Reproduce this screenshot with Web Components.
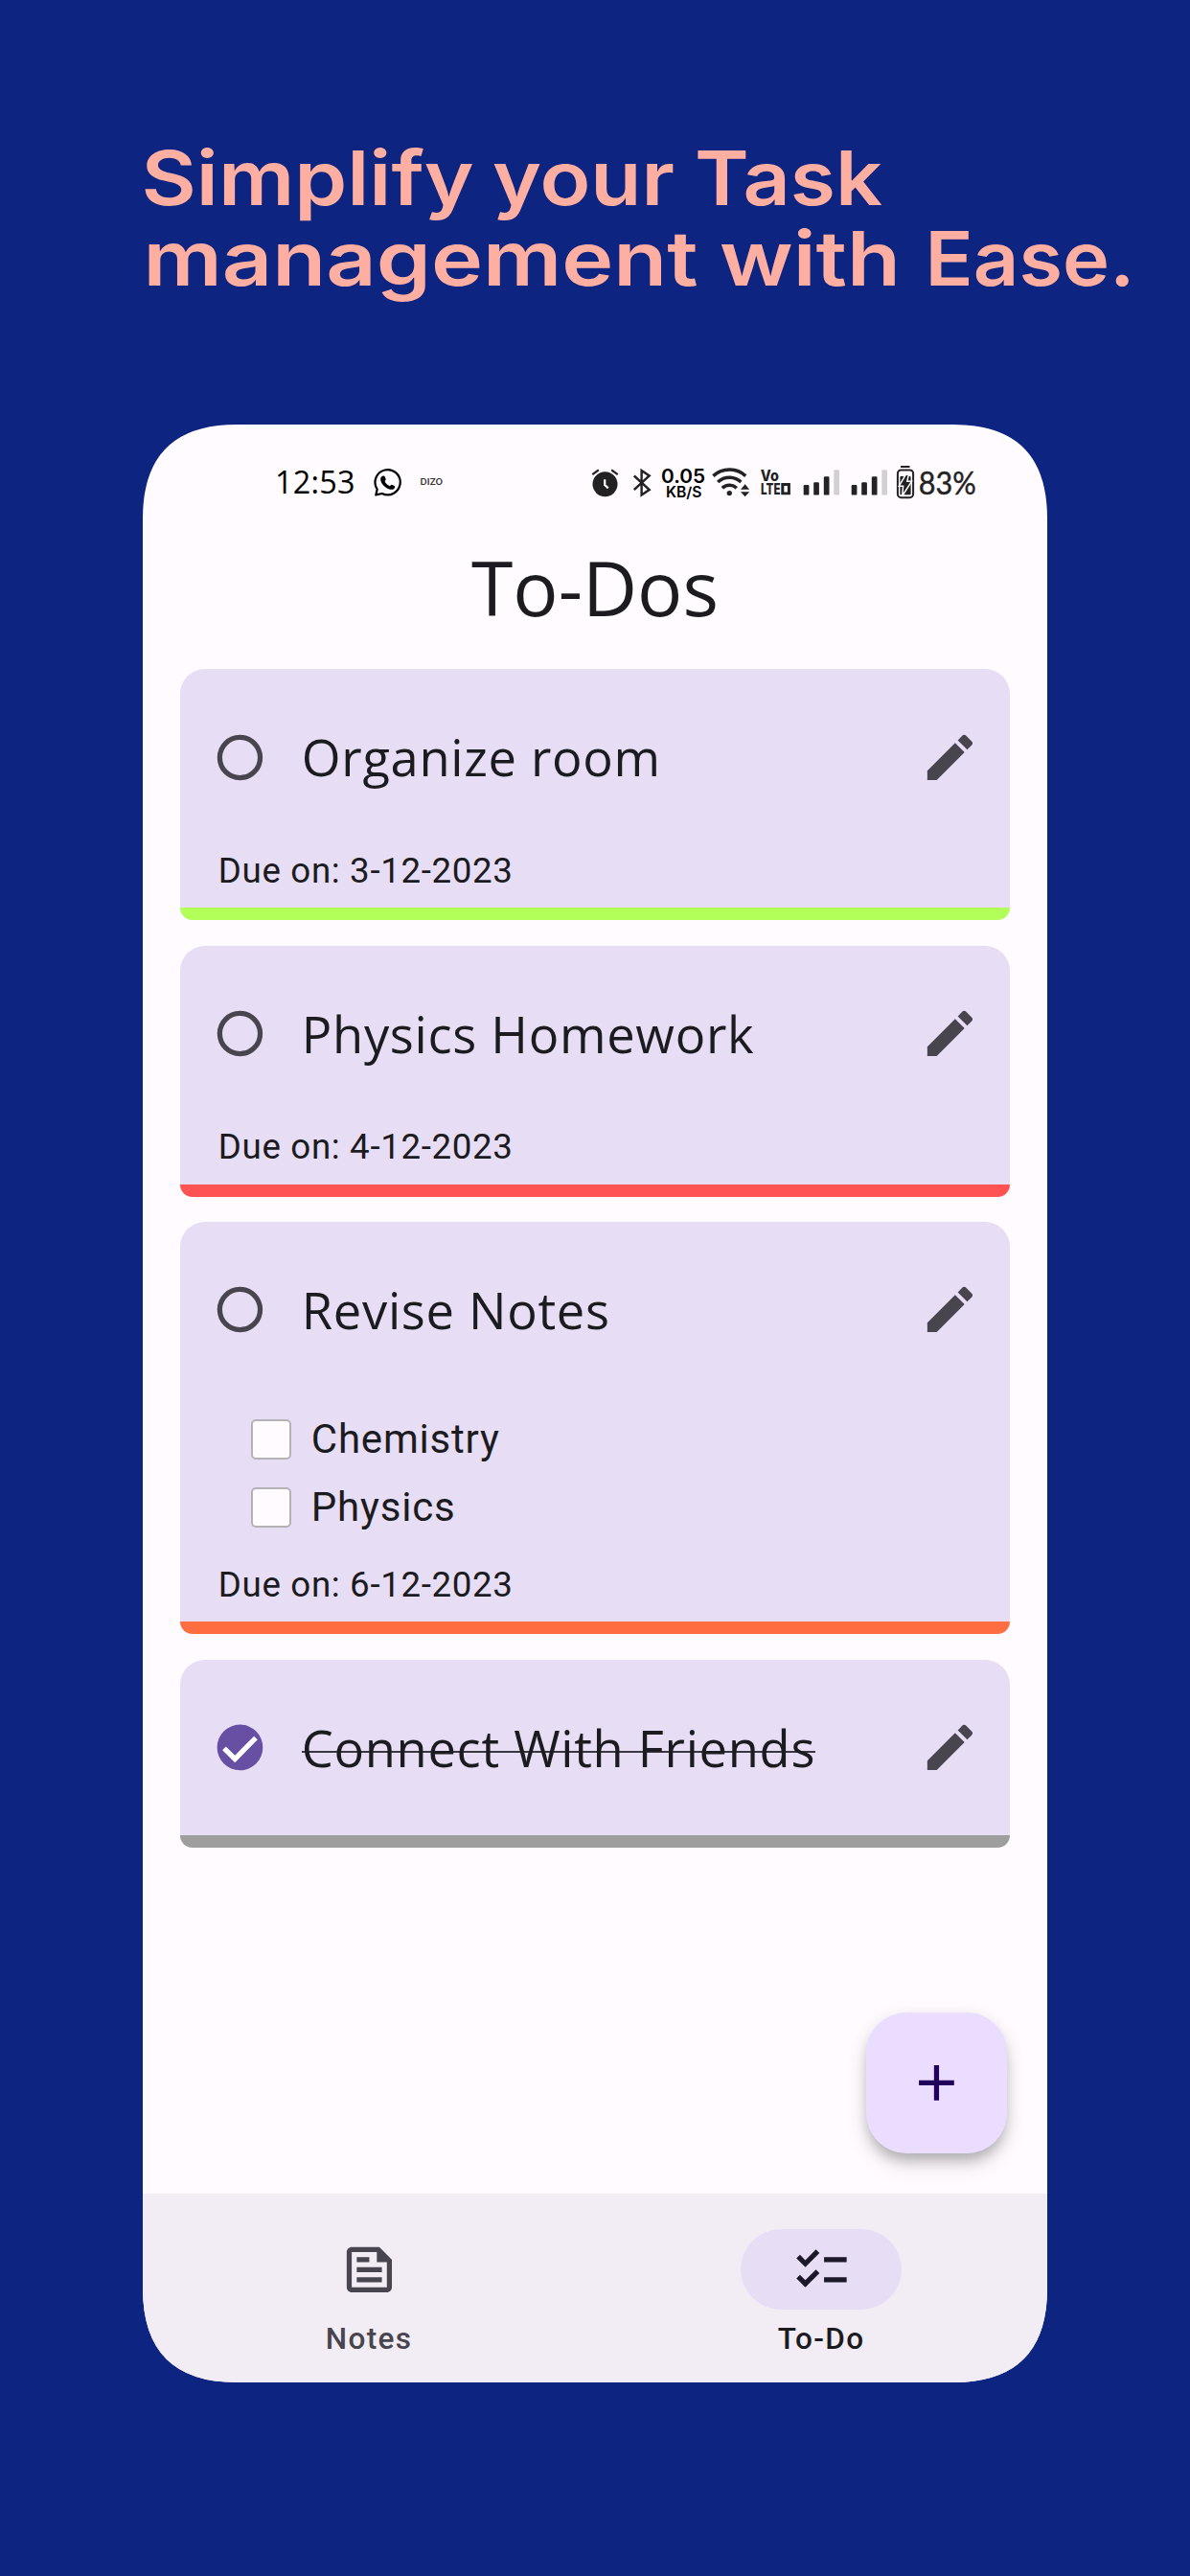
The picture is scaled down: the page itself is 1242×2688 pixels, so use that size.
<!DOCTYPE html>
<html lang="en">
<head>
<meta charset="utf-8">
<title>To-Dos</title>
<style>
html,body{margin:0;padding:0;background:#0d2481}
</style>
</head>
<body>
<promo-page>
  <phone-frame>
    <status-bar></status-bar>
    <page-title>To-Dos</page-title>
    <todo-list>
      <todo-card stripe="#b2ff59" due="3-12-2023">Organize room</todo-card>
      <todo-card stripe="#ff5252" due="4-12-2023">Physics Homework</todo-card>
      <todo-card stripe="#ff6e40" due="6-12-2023">Revise Notes
        <sub-task slot="tasks">Chemistry</sub-task>
        <sub-task slot="tasks">Physics</sub-task>
      </todo-card>
      <todo-card stripe="#9e9e9e" done>Connect With Friends</todo-card>
    </todo-list>
    <add-button></add-button>
    <nav-bar slot="nav">
      <nav-item icon="feed">Notes</nav-item>
      <nav-item icon="checklist" active>To-Do</nav-item>
    </nav-bar>
  </phone-frame>
</promo-page>
<script>
const ICONS = {
  edit: 'M3 17.25V21h3.75L17.81 9.94l-3.75-3.75L3 17.25zM20.71 7.04c.39-.39.39-1.02 0-1.41l-2.34-2.34c-.39-.39-1.02-.39-1.41 0l-1.83 1.83 3.75 3.75 1.83-1.83z',
  feed: 'M16 3H5C3.9 3 3 3.9 3 5v14c0 1.1.9 2 2 2h14c1.1 0 2-.9 2-2V8l-5-5zM19 19H5V5h10v4h4v10zM7 17h10v-2H7v2zM12 7H7v2h5V7zM7 13h10v-2H7v2z',
  checklist: 'M22 7h-9v2h9V7zM22 15h-9v2h9v-2zM5.54 11L2 7.46l1.41-1.41 2.12 2.12 4.24-4.24 1.41 1.41L5.54 11zM5.54 19L2 15.46l1.41-1.41 2.12 2.12 4.24-4.24 1.41 1.41L5.54 19z',
  add: 'M19 13h-6v6h-2v-6H5v-2h6V5h2v6h6v2z'
};
const icon = n => `<svg viewBox="0 0 24 24" width="62.9" height="62.9" fill="currentColor" fill-rule="evenodd"><path d="${ICONS[n]}"/></svg>`;

function define(name, render) {
  customElements.define(name, class extends HTMLElement {
    constructor() { super(); this.attachShadow({ mode: 'open' }); }
    connectedCallback() { this.shadowRoot.innerHTML = render(this); }
  });
}

const word = (x, w, t) => `<tspan x="${x}" textLength="${w}" lengthAdjust="spacingAndGlyphs">${t}</tspan>`;

define('promo-page', () => `
<style>
:host{display:flex;flex-direction:column;align-items:flex-start;width:1242px;height:2688px;background:#0d2481;overflow:hidden}
h1{margin:0;padding:120px 0 0 130px;height:323px;font-size:0}
.h{display:block;fill:#ffafa2;font-family:Inter,"Liberation Sans",sans-serif;font-weight:580;font-size:78.5px}
slot{display:block;margin-left:149px}
</style>
<h1><svg class="h" width="1100" height="220" viewBox="130 120 1100 220">
<text y="213.6">${word(147.5, 347, 'Simplify')} ${word(514, 190, 'your')} ${word(725, 196, 'Task')}</text>
<text y="297.6">${word(149.5, 579, 'management')} ${word(751, 189, 'with')} ${word(965.5, 219, 'Ease.')}</text></svg></h1>
<slot></slot>`);

define('phone-frame', () => `
<style>
:host{display:flex;flex-direction:column;width:944px;height:2043px;background:#fffbff;color:#1c1b1f;
clip-path:path("M0 98Q0 0 98 0H846Q944 0 944 98V1945Q944 2043 846 2043H98Q0 2043 0 1945Z")}
main{flex:1;display:flex;flex-direction:column}
</style>
<main><slot></slot></main><slot name="nav"></slot>`);

const bars = x => `<svg style="margin-left:${x > 860 ? 11 : 12}px" width="39" height="36" viewBox="${x} 486 39 36"><g fill="#232323">
<rect x="${x + .7}" y="506" width="5.7" height="10.6" rx="1.2"/><rect x="${x + 11.2}" y="503.3" width="5.7" height="13.3" rx="1.2"/><rect x="${x + 21.8}" y="497.2" width="5.7" height="19.4" rx="1.2"/></g><rect x="${x + 32.3}" y="490.2" width="5.7" height="26.4" rx="1.2" fill="#d3d0d3"/></svg>`;

define('status-bar', () => `
<style>
:host{display:flex;align-items:flex-start;height:74px;padding:43px 0 0 139px;color:#222}
svg{display:block;flex:none;fill:#222;overflow:visible;font-family:Inter,"Liberation Sans",sans-serif}
.k{fill:#000}
</style>
<svg class="k" width="81" height="36" viewBox="288 486 81 36"><text x="287" y="514.7" font-family="Open Sans" font-size="32.4" font-weight="500" textLength="83.5">12:53</text></svg>
<svg class="k" style="margin-left:21px" width="30" height="36" viewBox="390 486 30 36">
<path d="M392.3 516.4L393.7 510.5A13.1 13.1 0 1 1 398.8 515Z" fill="none" stroke="#000" stroke-width="2.2" stroke-linejoin="round"/>
<path d="M398.4 497.2c1.3-1.1 2.8-.9 3.3.4l1 2.5c.2.7-.8 1.6-1.1 2.2 1.2 2.4 2.8 4 5.2 4.9.7-.4 1.3-1.7 2-1.5l2.9 1.4c.9.5.4 2.1-.4 2.8-1.8 1.5-4.5 1.2-7.7-.7-3-1.7-5.2-4.3-6.2-7.5-.5-1.8-.2-3.500 1-4.500z"/></svg>
<svg style="margin-left:18px" width="26" height="36" viewBox="438 486 26 36"><text x="438.600" y="506.400" font-size="8.500" font-weight="600" fill="#333" textLength="23.500" lengthAdjust="spacingAndGlyphs">DIZO</text></svg>
<svg style="margin-left:153px" width="29" height="36" viewBox="617 486 29 36">
<circle cx="631.500" cy="505.300" r="13"/><path d="M618.300 495.200L624.800 490.300M644.700 495.200L638.200 490.300" stroke="#222" stroke-width="2.200"/>
<path d="M631.200 500.200V506L634.800 509.300" fill="none" stroke="#fffbff" stroke-width="2.300"/></svg>
<svg style="margin-left:15px" width="19" height="36" viewBox="661 486 19 36"><path d="M661.800 496.500L677.700 511L669.600 516.500V491L677.700 496.500L661.800 511" fill="none" stroke="#222" stroke-width="2.400" stroke-linejoin="miter"/></svg>
<svg class="k" style="margin-left:10px" width="46" height="36" viewBox="690 486 46 36"><text x="690" y="503.500" font-size="20.500" font-weight="560" textLength="46" lengthAdjust="spacingAndGlyphs">0.05</text><text x="695" y="518.700" font-size="15.300" font-weight="560" textLength="37.500" lengthAdjust="spacingAndGlyphs">KB/S</text></svg>
<svg style="margin-left:7px" width="40" height="36" viewBox="743 486 40 36"><circle cx="761.300" cy="514.600" r="2.700"/>
<g fill="none" stroke="#222" stroke-width="3.500"><path d="M744.400 496.600A25 25 0 0 1 778.200 496.600"/><path d="M749.200 503A17.500 17.500 0 0 1 773.400 503"/><path d="M753.800 509.300A10.800 10.800 0 0 1 768.800 509.300"/></g>
<path d="M773 510.800L777.600 505.300L782.200 510.800ZM773 513.300L777.600 518.200L782.200 513.300Z"/></svg>
<svg style="margin-left:11px" width="32" height="36" viewBox="794 486 32 36"><text x="793.800" y="502" font-size="16" font-weight="800" textLength="19" lengthAdjust="spacingAndGlyphs">Vo</text><text x="794" y="516.200" font-size="16.500" font-weight="800" textLength="20.500" lengthAdjust="spacingAndGlyphs">LTE</text>
<path fill-rule="evenodd" d="M815.300 504H824.900V516.300H815.300ZM818.300 507V513.400H821.900V507Z"/></svg>
${bars(838)}${bars(888)}
<svg style="margin-left:9px" width="18" height="36" viewBox="936 486 18 36"><path d="M940 487H949.500" stroke="#222" stroke-width="2"/><rect x="936.900" y="490.400" width="16.200" height="28.800" rx="3.600" fill="none" stroke="#222" stroke-width="2"/><rect x="939.400" y="497" width="11.200" height="19.200" rx=".8"/>
<path d="M945.300 495.300L938.300 507.200H942.600L941.700 517.500L951.500 502.300H946.800L948.300 495.300Z" fill="#222" stroke="#fffbff" stroke-width="1.500"/></svg>
<svg style="margin-left:5px" width="60" height="36" viewBox="959 486 60 36"><text x="958.800" y="515.500" font-family="Lato" font-size="32" textLength="60" lengthAdjust="spacingAndGlyphs" stroke="#222" stroke-width=".4">83%</text></svg>`);

define('page-title', () => `
<style>:host{display:block;height:104.400px;line-height:106.400px;text-align:center;font-family:"Open Sans",sans-serif;font-size:78.700px}</style><slot></slot>`);

define('todo-list', () => `
<style>:host{display:flex;flex-direction:column;gap:26.200px;padding:33.900px 39.300px 0}</style><slot></slot>`);

define('todo-card', el => `
<style>
:host{display:block;background:#e7def6;border-radius:26px 26px 13px 13px;overflow:hidden}
.row{display:flex;align-items:center;height:183.400px;padding:0 31px 0}
.mark{flex:none;width:62.900px;height:62.900px;color:#49454f}
.mark svg,.pen svg{display:block}
.title{flex:1;margin-left:32.600px;font:400 52.440px/71px "Open Sans",sans-serif;letter-spacing:.7px;white-space:nowrap}
.title span{${el.hasAttribute('done') ? 'background:linear-gradient(#3a3740,#3a3740) 0 39px/100% 2px no-repeat' : ''}}
.pen{flex:none;color:#49454f}
.due{height:43px;padding:5.300px 39.500px 17.300px;font:400 36.700px/43px Roboto,sans-serif;letter-spacing:.66px;white-space:pre}
.tasks{display:block;padding:8px 73.500px 18.200px}
.stripe{height:13.200px;background:${el.getAttribute('stripe')}}
</style>
<div class="row"><div class="mark"><svg viewBox="0 0 24 24" width="62.900" height="62.900">${el.hasAttribute('done')
  ? '<circle cx="12" cy="12" r="9.100" fill="#6750a4"/><path d="M5.700 12.400L10 16.600L18.300 8.200" fill="none" stroke="#fff" stroke-width="2"/>'
  : '<circle cx="12" cy="12" r="8.050" fill="none" stroke="currentColor" stroke-width="2"/>'}</svg></div>
<div class="title"><span><slot></slot></span></div><div class="pen">${icon('edit')}</div></div>
${el.querySelector('sub-task') ? '<div class="tasks"><slot name="tasks"></slot></div>' : ''}
${el.hasAttribute('due') ? `<div class="due">Due on: ${el.getAttribute('due')}</div>` : ''}
<div class="stripe"></div>`);

define('sub-task', () => `
<style>
:host{display:flex;align-items:center;height:71px;font:400 42px/50px Roboto,sans-serif;letter-spacing:.8px}
i{box-sizing:border-box;width:42px;height:42px;border:2px solid #b5b2b5;border-radius:5px;background:#fffbff;margin-right:21px}
</style><i></i><slot></slot>`);

define('add-button', () => `
<style>
:host{display:flex;align-items:center;justify-content:center;align-self:flex-end;width:147px;height:147px;margin:auto 42px 42px 0;border-radius:42px;background:#eaddff;color:#21005d;
box-shadow:0 10px 13px -3px rgba(0,0,0,.2),0 14px 24px rgba(0,0,0,.09),0 3px 20px rgba(0,0,0,.08)}
</style>${icon('add')}`);

define('nav-bar', () => `
<style>:host{display:flex;height:197px;background:#f2edf5}::slotted(*){flex:1}</style><slot></slot>`);

define('nav-item', el => `
<style>
:host{display:flex;flex-direction:column;align-items:center;gap:10px;padding-top:37px;font:500 31.500px/42px Roboto,sans-serif;letter-spacing:1.310px;color:${el.hasAttribute('active') ? '#1c1b1f' : '#49454f'}}
.pill{display:flex;align-items:center;justify-content:center;width:168px;height:84px;border-radius:42px;${el.hasAttribute('active') ? 'background:#e7def6;color:#1d192b' : ''}}
</style><div class="pill">${icon(el.getAttribute('icon'))}</div><span><slot></slot></span>`);
</script>
</body>
</html>
